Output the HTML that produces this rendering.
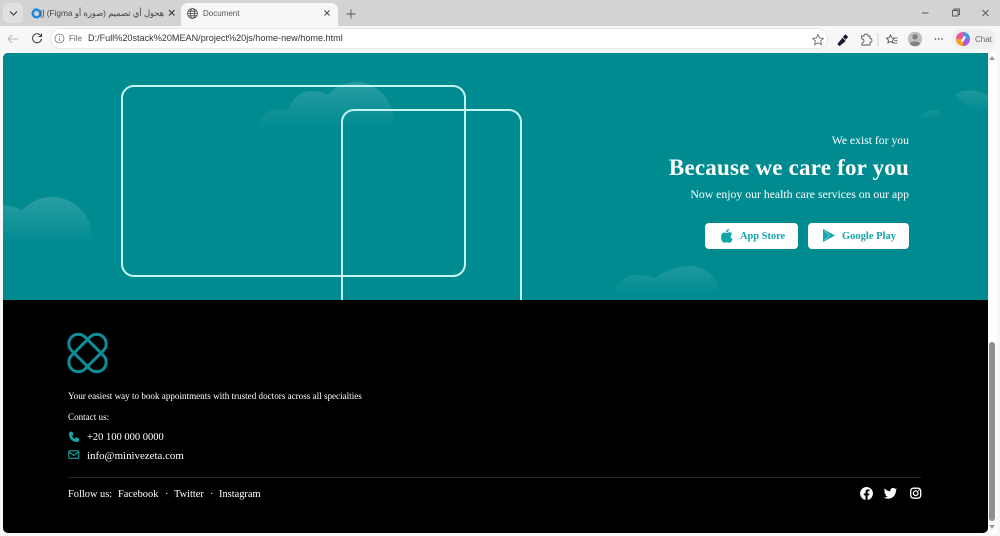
<!DOCTYPE html>
<html><head><meta charset="utf-8"><style>
*{box-sizing:border-box}
html,body{margin:0;padding:0;width:1000px;height:536px;overflow:hidden;background:#f7f7f7;font-family:"Liberation Serif",serif}
.a{position:absolute;white-space:nowrap}
.s{font-family:"Liberation Sans","Noto Sans CJK SC",sans-serif}
.w{color:#fff}
</style></head><body>
<div class="a" style="left:0;top:0;width:1000px;height:26px;background:#d3d3d3"></div>
<div class="a" style="left:3px;top:3px;width:20px;height:20px;background:#e0e0e0;border-radius:5px"></div>
<svg class="a" style="left:0;top:0" width="60" height="52" fill="none">
<path d="M10 11.500l3.500 3.500 3.500-3.500" stroke="#333" stroke-width="1.100"/>
<circle cx="36.500" cy="13.500" r="3.800" stroke="#1a86e0" stroke-width="2.400"/><path d="M33 8.500l5 0 0 3z" fill="#1a86e0"/>
<path d="M18 39h-10M8 39l4-4M8 39l4 4" stroke="#b5b5b5" stroke-width="1"/>
<path d="M41 36a4.500 4.500 0 1 0 .5 3M41.500 33.500v3h-3" stroke="#444" stroke-width="1.100"/>
</svg>
<div class="a s" style="left:50px;top:8px;font-size:8.300px;color:#444;direction:rtl;width:114px;text-align:right">هحول أي تصميم (صورة أو Figma) إ|</div>
<svg class="a" style="left:167px;top:8px" width="10" height="10" stroke="#333" stroke-width="1.100"><path d="M2 2l5.500 5.500M7.500 2l-5.500 5.500"/></svg>
<div class="a" style="left:181px;top:3px;width:157px;height:24px;background:#f7f7f7;border-radius:7px 7px 0 0"></div>
<svg class="a" style="left:187px;top:8px" width="11" height="11" fill="none" stroke="#444" stroke-width=".8"><circle cx="5.500" cy="5.500" r="4.900"/><ellipse cx="5.500" cy="5.500" rx="2.200" ry="4.900"/><path d="M.6 5.500h9.800M1.300 3.200h8.400M1.300 7.800h8.400"/></svg>
<div class="a s" style="left:203px;top:8.500px;font-size:8px;color:#555">Document</div>
<svg class="a" style="left:322px;top:8px" width="10" height="10" stroke="#444" stroke-width="1"><path d="M2.500 2.500l5 5M7.500 2.500l-5 5"/></svg>
<svg class="a" style="left:345px;top:8px" width="12" height="12" stroke="#555" stroke-width=".9"><path d="M6 1.500v9M1.500 6h9"/></svg>
<svg class="a" style="left:920px;top:6px" width="75" height="14" fill="none" stroke="#555" stroke-width=".9"><path d="M2 7h6.500M32.500 4.500h5.500v5.500h-5.500zM34 4.500v-1.500h5.500v5.500h-1.500M62.500 4l6 6M68.500 4l-6 6"/></svg>
<div class="a" style="left:50px;top:28px;width:778px;height:21px;background:#fff;border-radius:11px;border:1px solid #e8e8e8"></div>
<svg class="a" style="left:54px;top:33px" width="11" height="11" fill="none" stroke="#777" stroke-width=".8"><circle cx="5.500" cy="5.500" r="4.500"/><path d="M5.500 5v3M5.500 3v1"/></svg>
<div class="a s" style="left:69px;top:34px;font-size:8px;color:#666">File</div>
<div class="a s" style="left:88px;top:33px;font-size:9.100px;color:#333">D:/Full%20stack%20MEAN/project%20js/home-new/home.html</div>
<svg class="a" style="left:810px;top:30px" width="185" height="20" fill="none">
<path d="M8 4.500l1.600 3.400 3.700.5-2.700 2.600.7 3.700-3.300-1.900-3.300 1.900.7-3.700-2.700-2.600 3.700-.5z" stroke="#555" stroke-width=".8"/>
<path d="M28 14l4.500-5.500 2.500 2.500-5.500 4.500zM33.500 7l2-2 2 2-2 2z" fill="#1a1a2e" stroke="#1a1a2e"/>
<path d="M51.500 6h2.500a2 2 0 0 1 4 0h2v2.500a2 2 0 0 1 0 4v2.500h-8v-2a2 2 0 0 0 0-4z" stroke="#555" stroke-width=".9"/>
<path d="M68 4v12" stroke="#ccc" stroke-width=".8"/>
<path d="M80.500 5l1.300 2.800 2.800.4-2 1.900.5 2.800-2.600-1.400-2.600 1.400.5-2.800-2-1.900 2.800-.4zM85 8h2.500M84.500 10.500h3M83.500 13h4" stroke="#444" stroke-width=".8"/>
<circle cx="105" cy="9" r="7.200" fill="#c0c0c0"/><circle cx="105" cy="6.800" r="2.700" fill="#808080"/><path d="M99.800 14c1-3.500 9.400-3.500 10.400 0a7.200 7.200 0 0 1-10.400 0z" fill="#808080"/>
<circle cx="125.500" cy="9" r=".8" fill="#444"/><circle cx="128.700" cy="9" r=".8" fill="#444"/><circle cx="132" cy="9" r=".8" fill="#444"/>
</svg>
<div class="a" style="left:952px;top:29px;width:44px;height:20px;background:#efefef;border-radius:10px"></div>
<svg class="a" style="left:955px;top:31px" width="16" height="16"><circle cx="8" cy="8" r="7" fill="#e85aa0"/><path d="M8 1a7 7 0 0 1 7 7H8z" fill="#3f9be8"/><path d="M1 8a7 7 0 0 0 7 7V8z" fill="#f5a623"/><path d="M15 8a7 7 0 0 1-7 7V8z" fill="#a85ae0"/><path d="M6 10l3-5 2 1-3 5z" fill="#fff"/></svg>
<div class="a s" style="left:975px;top:34.500px;font-size:8px;color:#666">Chat</div>

<div class="a" style="left:3px;top:53px;width:985px;height:480px;background:#000;border-radius:5px 0 5px 5px;overflow:hidden">
  <div class="a" style="left:0;top:0;width:985px;height:247px;background:#008b91;overflow:hidden">
    <svg class="a" style="left:0;top:0" width="985" height="247">
      <defs><linearGradient id="g" x1="0" y1="0" x2="0" y2="1"><stop offset="0" stop-color="#fff" stop-opacity=".16"/><stop offset=".85" stop-color="#fff" stop-opacity="0"/></linearGradient></defs>
      <path d="M0 152Q10 153 19 157C28 148 38 144 49 144C70 144 86 160 89 178L89 198H0Z" fill="url(#g)"/>
      <path d="M254 80C256 62 264 57 275 56L284 58C290 45 298 38 307 38C314 38 320 39 325 42C332 33 343 29 354 29C372 29 386 44 390 60L391 84H254Z" fill="url(#g)"/>
      <path d="M606 247C614 228 624 222 634 222C642 222 648 223 652 225C662 217 675 213 687 213C700 213 710 222 714 230L716 247Z" fill="url(#g)" opacity=".75"/>
      <path d="M952 42C958 36 970 36 985 42V64C972 60 960 52 952 42Z" fill="url(#g)" opacity=".7"/>
      <path d="M912 68C918 61 925 57 932 57C936 57 938 60 937 64C930 69 920 70 912 68Z" fill="url(#g)" opacity=".5"/>
    </svg>
    <div class="a" style="left:118px;top:32px;width:345px;height:192px;border:2.500px solid #c4f4f2;border-radius:13px"></div>
    <div class="a" style="left:338px;top:55.500px;width:181px;height:215px;border:2.500px solid #c4f4f2;border-radius:13px"></div>
    <div class="a w" style="right:79px;top:81px;font-size:11.700px">We exist for you</div>
    <div class="a w" style="right:79px;top:102px;font-size:23px;font-weight:bold;letter-spacing:.2px">Because we care for you</div>
    <div class="a w" style="right:79px;top:135px;font-size:11.750px">Now enjoy our health care services on our app</div>
    <div class="a" style="left:702px;top:170px;width:93px;height:26px;background:#fff;border-radius:4px"></div>
    <div class="a" style="left:805px;top:170px;width:101px;height:26px;background:#fff;border-radius:4px"></div>
    <svg class="a" style="left:717px;top:176px" width="13" height="14" fill="#14a5a8"><path d="M9 0c0 1.800-1.300 3.200-3 3.200C6 1.500 7.300.2 9 0zM6.400 4c1 0 1.800-.7 3-.7 1.200 0 2.200.6 2.800 1.500-2.200 1.300-1.900 4.300.4 5.300-.6 1.500-1.800 3.700-3.200 3.700-1 0-1.300-.6-2.500-.6s-1.600.6-2.500.6C2.800 13.800 1 10.800 1 8c0-2.800 1.800-4.500 3.500-4.500 1 0 1.300.5 1.900.5z"/></svg>
    <div class="a" style="left:737px;top:177.500px;font-size:10.400px;font-weight:bold;color:#14a5a8">App Store</div>
    <svg class="a" style="left:819px;top:175px" width="14" height="15" fill="#14a5a8"><path d="M1 1l12 6.500L1 14z"/><path d="M2.500 3l5 4.500-5 4.500" fill="none" stroke="#fff" stroke-width=".5"/></svg>
    <div class="a" style="left:839px;top:177.500px;font-size:10.500px;font-weight:bold;color:#14a5a8">Google Play</div>
  </div>
  <svg class="a" style="left:64px;top:279px" width="42" height="42" fill="none" stroke="#0e8d97" stroke-width="3"><rect x="-2" y="11.500" width="45" height="19" rx="9.500" transform="rotate(45 20.500 21)"/><rect x="-2" y="11.500" width="45" height="19" rx="9.500" transform="rotate(-45 20.500 21)"/></svg>
  <div class="a w" style="left:65px;top:337.500px;font-size:9.100px">Your easiest way to book appointments with trusted doctors across all specialties</div>
  <div class="a w" style="left:65px;top:358.500px;font-size:9.100px">Contact us:</div>
  <svg class="a" style="left:65px;top:377.500px" width="12" height="12" fill="#14a5a8"><path d="M2.500.5l2 .5 1 3-1.500 1c.5 1.300 1.500 2.300 2.800 2.800l1-1.500 3 1 .4 2.200c-.5 1-1.500 1.500-2.500 1.500C4 11 .5 6.500 1 2.500c.1-.9.7-1.600 1.500-2z"/></svg>
  <div class="a w" style="left:84px;top:378.500px;font-size:10.500px">+20 100 000 0000</div>
  <svg class="a" style="left:65px;top:396px" width="12" height="12" fill="none" stroke="#14a5a8" stroke-width="1.100"><rect x=".8" y="1.800" width="10" height="7.500" rx="1"/><path d="M1 3l4.800 3.500L10.800 3"/></svg>
  <div class="a w" style="left:84px;top:396.500px;font-size:10.900px">info@minivezeta.com</div>
  <div class="a" style="left:65px;top:424px;width:853px;height:1px;background:#262626"></div>
  <div class="a" style="left:65px;top:436px;font-size:10.400px;color:#fff">Follow us:</div>
  <div class="a w" style="left:115px;top:436px;font-size:10.400px">Facebook</div>
  <div class="a w" style="left:162px;top:436px;font-size:10.400px">·</div>
  <div class="a w" style="left:171px;top:436px;font-size:10.400px">Twitter</div>
  <div class="a w" style="left:207px;top:436px;font-size:10.400px">·</div>
  <div class="a w" style="left:216px;top:436px;font-size:10.400px">Instagram</div>
  <svg class="a" style="left:857px;top:434px" width="62" height="13"><path d="M6.500 0a6.500 6.500 0 0 0-1 12.900V8.400H3.800V6.500h1.700V5c0-1.700 1-2.600 2.500-2.600l1.500.1v1.600h-.9c-.8 0-1 .5-1 1v1.400h1.800l-.3 1.900H7.600v4.500A6.500 6.500 0 0 0 6.500 0z" fill="#fff"/><path d="M37 2.200c-.5.200-1 .4-1.500.4.500-.3 1-.8 1.200-1.400-.5.300-1.100.5-1.700.6a2.700 2.700 0 0 0-4.600 2.500C28 4.200 26 3.100 24.700 1.500c-.7 1.200-.4 2.800.8 3.600-.4 0-.9-.1-1.200-.3 0 1.300.9 2.400 2.100 2.700-.4.100-.8.100-1.200 0 .3 1.100 1.300 1.900 2.500 1.900-1.100.9-2.600 1.300-4 1.100 4 2.600 12.300 1 12.300-7.400.5-.2.800-.6 1-.9z" fill="#fff"/><g fill="none" stroke="#fff" stroke-width="1.300"><rect x="50.700" y="1.200" width="10" height="10" rx="2.800"/><circle cx="55.700" cy="6.200" r="2.300"/></g><circle cx="58.700" cy="3.300" r=".7" fill="#fff"/></svg>
</div>
<div class="a" style="left:988px;top:53px;width:9px;height:480px;background:#fdfdfd"></div>
<div class="a" style="left:989px;top:342px;width:6px;height:179px;background:#8f8f8f;border-radius:3px"></div>
<svg class="a" style="left:988px;top:55px" width="8" height="6" fill="#999"><path d="M4 1l3 4H1z"/></svg>
<svg class="a" style="left:988px;top:524px" width="8" height="6" fill="#999"><path d="M4 5L1 1h6z"/></svg>
</body></html>
